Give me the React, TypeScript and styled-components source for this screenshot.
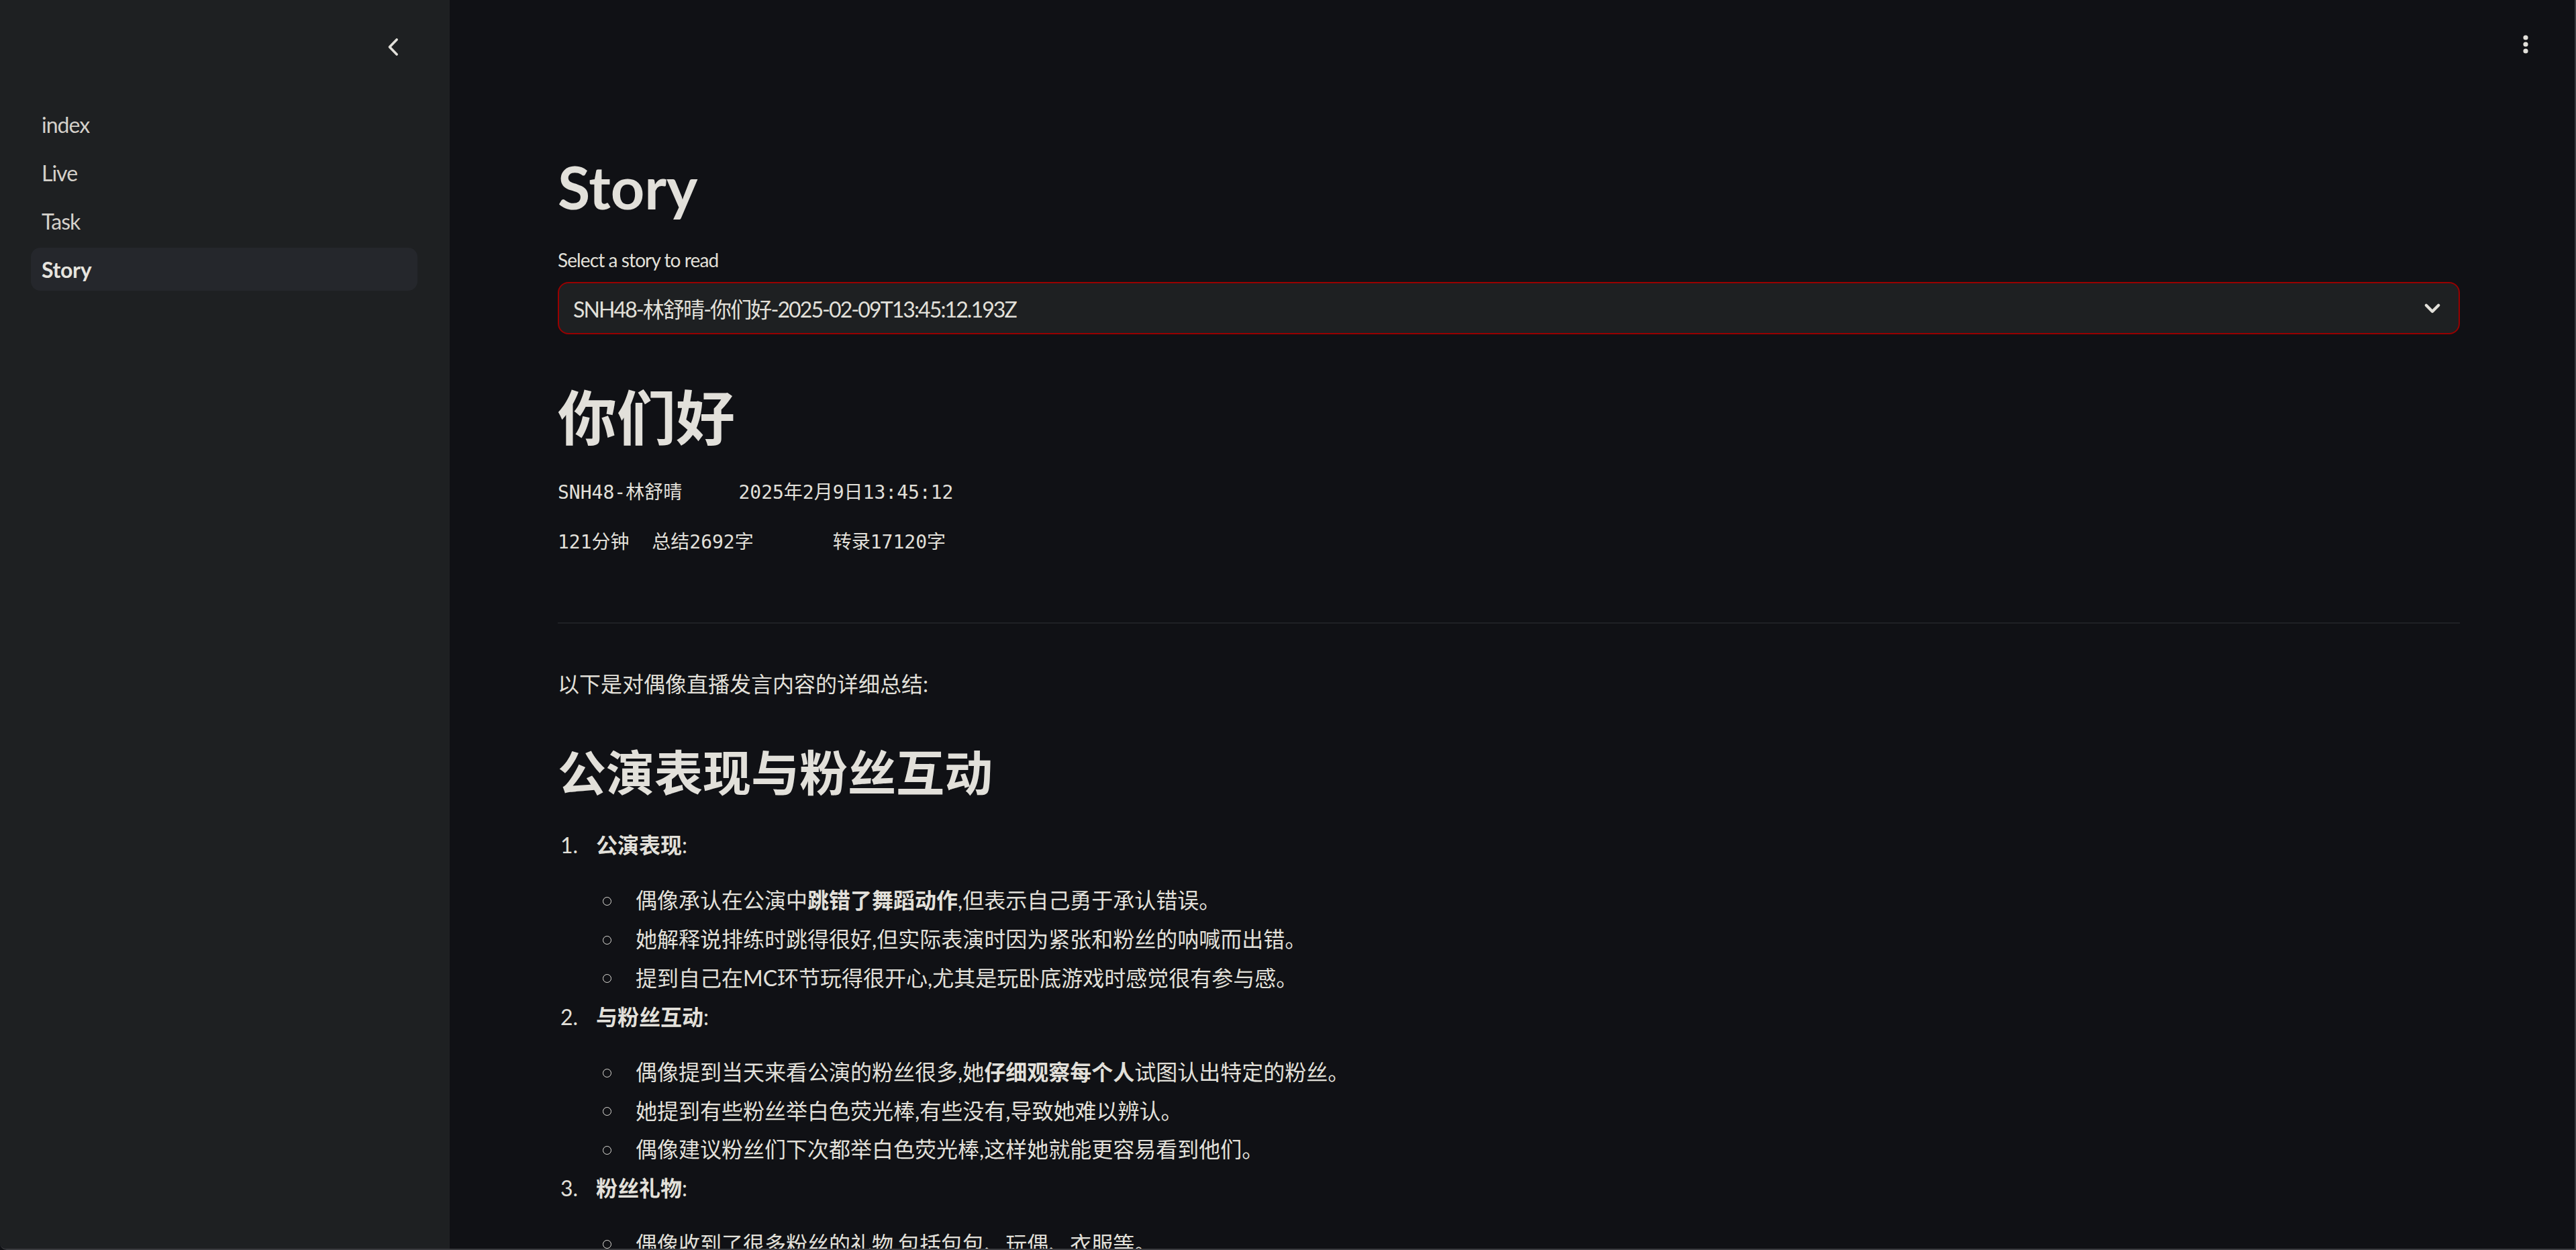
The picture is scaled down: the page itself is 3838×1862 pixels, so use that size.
import React from "react";
import styled, { createGlobalStyle } from "styled-components";

const GlobalStyle = createGlobalStyle`
  html, body { margin: 0; padding: 0; background: #101115; }
  body { font-family: Lato, "Noto Sans CJK SC", sans-serif; color: #e2e0da; }
  * { box-sizing: border-box; }
`;

const Shell = styled.div`
  display: flex;
  width: 100vw;
  height: 100vh;
  overflow: hidden;
  background: #101115;
  border-right: 2px solid #3a3b3f;
  border-bottom: 2px solid #3a3b3f;
  border-bottom-left-radius: 10px;
`;

const Sidebar = styled.aside`
  flex: 0 0 670px;
  display: flex;
  flex-direction: column;
  background: #1e2022;
  padding: 48px 48px 0 46px;
`;

const CollapseRow = styled.div`
  display: flex;
  justify-content: flex-end;
  padding-right: 14px;
  height: 44px;
  align-items: center;
`;

const IconButton = styled.button`
  display: flex;
  align-items: center;
  justify-content: center;
  width: 44px;
  height: 44px;
  padding: 0;
  border: none;
  background: transparent;
  color: #e2e0da;
`;

const Nav = styled.nav`
  display: flex;
  flex-direction: column;
  gap: 8px;
  margin-top: 61px;
`;

const NavItem = styled.a<{ $active?: boolean }>`
  display: flex;
  align-items: center;
  height: 64px;
  padding: 0 16px;
  border-radius: 14px;
  font-size: 32px;
  letter-spacing: ${(p) => (p.$active ? "-0.3px" : "-1px")};
  font-weight: ${(p) => (p.$active ? 700 : 400)};
  color: ${(p) => (p.$active ? "#e6e4df" : "#d4d0ca")};
  background: ${(p) => (p.$active ? "#25272c" : "transparent")};
  text-decoration: none;
`;

const Main = styled.main`
  flex: 1;
  display: flex;
  flex-direction: column;
  overflow: hidden;
`;

const TopBar = styled.header`
  flex: 0 0 132px;
  display: flex;
  justify-content: flex-end;
  align-items: center;
  padding-right: 51px;
`;

const Content = styled.div`
  padding: 94px 171px 0 161px;
  display: flex;
  flex-direction: column;
`;

const PageTitle = styled.h1`
  margin: 0;
  font-size: 88px;
  line-height: 1.2;
  font-weight: 700;
  color: #e2e0da;
`;

const FieldLabel = styled.label`
  margin-top: 33px;
  font-size: 28px;
  line-height: 44.8px;
  letter-spacing: -0.9px;
  color: #e2e0da;
`;

const SelectBox = styled.div`
  margin-top: 11px;
  height: 78px;
  display: flex;
  align-items: center;
  justify-content: space-between;
  padding: 0 19px 0 21px;
  background: #1e2022;
  border: 2px solid #980000;
  border-radius: 16px;
  font-size: 32px;
  letter-spacing: -1.9px;
  color: #e2e0da;
`;

const StoryTitle = styled.h1`
  margin: 71px 0 0;
  font-size: 88px;
  line-height: 1.2;
  font-weight: 700;
  color: #e2e0da;
`;

const MetaLine = styled.div<{ $gap: number }>`
  margin-top: ${(p) => p.$gap}px;
  font-family: "DejaVu Sans Mono", "Noto Sans CJK SC", monospace;
  font-size: 28px;
  line-height: 44.8px;
  white-space: pre;
  color: #e2e0da;
`;

const Rule = styled.hr`
  margin: 96px 0 0;
  height: 2px;
  border: none;
  background: #1f2125;
`;

const Paragraph = styled.p`
  margin: 64px 0 0;
  font-size: 32px;
  line-height: 51.2px;
`;

const SectionTitle = styled.h2`
  margin: 63px 0 0;
  font-size: 72px;
  line-height: 86.4px;
  font-weight: 700;
`;

const OrderedList = styled.ol`
  list-style: none;
  margin: 40px 0 0;
  padding: 0;
`;

const OrderedItem = styled.li`
  display: flex;
  flex-direction: column;
  margin-bottom: 7px;
`;

const ItemHead = styled.div`
  display: flex;
  font-size: 32px;
  line-height: 51.2px;
`;

const Number = styled.span`
  flex: 0 0 57px;
  text-align: right;
  padding-right: 27px;
`;

const SubList = styled.ul`
  list-style: none;
  margin: 31px 0 0 57px;
  padding: 0;
  display: flex;
  flex-direction: column;
  gap: 6.4px;
`;

const SubItem = styled.li`
  display: flex;
  align-items: center;
  font-size: 32px;
  line-height: 51.2px;
`;

const Bullet = styled.span`
  flex: 0 0 59px;
  display: flex;
  align-items: center;
  padding-left: 10px;
  padding-top: 3px;
  &::before {
    content: "";
    width: 11px;
    height: 11px;
    border: 1.5px solid #e2e0da;
    border-radius: 50%;
  }
`;

const ChevronLeft = () => (
  <svg width="48" height="48" viewBox="0 0 24 24" fill="none" stroke="currentColor" strokeWidth="2" strokeLinecap="round" strokeLinejoin="round">
    <path d="M14.8 6 L9 12 L14.8 18" />
  </svg>
);

const ChevronDown = () => (
  <svg width="40" height="40" viewBox="0 0 24 24" fill="none" stroke="currentColor" strokeWidth="2.6" strokeLinecap="round" strokeLinejoin="round">
    <path d="M6.5 9.5 L12 15 L17.5 9.5" />
  </svg>
);

const Kebab = () => (
  <svg width="10" height="32" viewBox="0 0 10 32" fill="currentColor">
    <circle cx="5" cy="6" r="3.6" />
    <circle cx="5" cy="16" r="3.6" />
    <circle cx="5" cy="26" r="3.6" />
  </svg>
);

type Sub = React.ReactNode;
const sections: { n: number; title: string; items: Sub[] }[] = [
  {
    n: 1,
    title: "公演表现",
    items: [
      <>偶像承认在公演中<b>跳错了舞蹈动作</b>,但表示自己勇于承认错误。</>,
      <>她解释说排练时跳得很好,但实际表演时因为紧张和粉丝的呐喊而出错。</>,
      <>提到自己在MC环节玩得很开心,尤其是玩卧底游戏时感觉很有参与感。</>,
    ],
  },
  {
    n: 2,
    title: "与粉丝互动",
    items: [
      <>偶像提到当天来看公演的粉丝很多,她<b>仔细观察每个人</b>试图认出特定的粉丝。</>,
      <>她提到有些粉丝举白色荧光棒,有些没有,导致她难以辨认。</>,
      <>偶像建议粉丝们下次都举白色荧光棒,这样她就能更容易看到他们。</>,
    ],
  },
  {
    n: 3,
    title: "粉丝礼物",
    items: [
      <>偶像收到了很多粉丝的礼物,包括包包、玩偶、衣服等。</>,
      <>她表示会好好珍惜这些礼物,并感谢粉丝们的心意。</>,
    ],
  },
];

export default function App() {
  return (
    <>
      <GlobalStyle />
      <Shell>
        <Sidebar>
          <CollapseRow>
            <IconButton aria-label="Collapse sidebar">
              <ChevronLeft />
            </IconButton>
          </CollapseRow>
          <Nav>
            <NavItem>index</NavItem>
            <NavItem>Live</NavItem>
            <NavItem>Task</NavItem>
            <NavItem $active>Story</NavItem>
          </Nav>
        </Sidebar>
        <Main>
          <TopBar>
            <IconButton aria-label="Main menu">
              <Kebab />
            </IconButton>
          </TopBar>
          <Content>
            <PageTitle>Story</PageTitle>
            <FieldLabel>Select a story to read</FieldLabel>
            <SelectBox>
              <span>SNH48-林舒晴-你们好-2025-02-09T13:45:12.193Z</span>
              <ChevronDown />
            </SelectBox>
            <StoryTitle>你们好</StoryTitle>
            <MetaLine $gap={37}>{"SNH48-林舒晴     2025年2月9日13:45:12"}</MetaLine>
            <MetaLine $gap={29}>{"121分钟  总结2692字       转录17120字"}</MetaLine>
            <Rule />
            <Paragraph>以下是对偶像直播发言内容的详细总结:</Paragraph>
            <SectionTitle>公演表现与粉丝互动</SectionTitle>
            <OrderedList>
              {sections.map((s) => (
                <OrderedItem key={s.n}>
                  <ItemHead>
                    <Number>{s.n}.</Number>
                    <span>
                      <b>{s.title}</b>:
                    </span>
                  </ItemHead>
                  <SubList>
                    {s.items.map((it, i) => (
                      <SubItem key={i}>
                        <Bullet />
                        <span>{it}</span>
                      </SubItem>
                    ))}
                  </SubList>
                </OrderedItem>
              ))}
            </OrderedList>
          </Content>
        </Main>
      </Shell>
    </>
  );
}
